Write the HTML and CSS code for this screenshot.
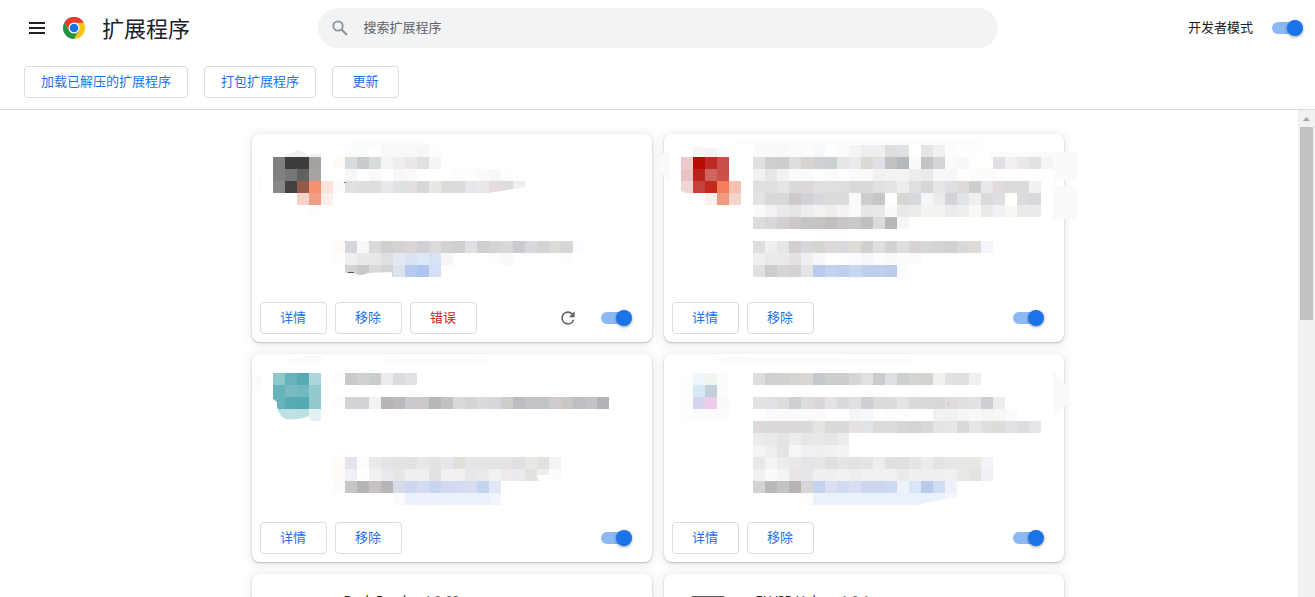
FILE: index.html
```html
<!DOCTYPE html>
<html lang="zh-CN">

<head>
  <meta charset="UTF-8">
  <meta name="viewport" content="width=device-width, initial-scale=1.0">
  <title>扩展程序</title>
  <link rel="stylesheet" href="styles.css">
</head>

<body>
  <header class="header">
    <div class="toolbar">
      <div class="toolbar-left">
        <button class="icon-button" type="button" aria-label="主菜单">
          <svg width="16" height="12" viewBox="0 0 16 12">
            <path d="M0 0h16v2H0zM0 5h16v2H0zM0 10h16v2H0z" fill="#202124" />
          </svg>
        </button>
        <svg class="logo" width="22" height="22" viewBox="0 0 48 48" aria-hidden="true">
          <path d="M24 24 3.2 12A24 24 0 0 1 44.8 12Z" fill="#e33b2e" />
          <path d="M24 12H44.8A24 24 0 0 1 24 48L34.4 30Z" fill="#fcc31e" />
          <path d="M13.6 30 3.2 12A24 24 0 0 0 24 48L34.4 30Z" fill="#229342" />
          <path d="M3.2 12 13.6 30 24 12H44.8A24 24 0 0 0 3.2 12Z" fill="#e33b2e" />
          <circle cx="24" cy="24" r="12" fill="#fff" />
          <circle cx="24" cy="24" r="9.5" fill="#1a73e8" />
        </svg>
        <h1 class="title">扩展程序</h1>
      </div>
      <div class="search">
        <svg width="16" height="16" viewBox="0 0 16 16" aria-hidden="true">
          <circle cx="6" cy="6" r="4.7" fill="none" stroke="#8f9296" stroke-width="1.8" />
          <path d="M9.5 9.5 15 15" stroke="#8f9296" stroke-width="2" />
        </svg>
        <input class="search-input" type="text" placeholder="搜索扩展程序" aria-label="搜索扩展程序">
      </div>
      <div class="toolbar-right">
        <label for="dev-mode">开发者模式</label>
        <input class="toggle" type="checkbox" id="dev-mode" checked>
      </div>
    </div>
    <div class="dev-buttons">
      <button class="btn" type="button">加载已解压的扩展程序</button>
      <button class="btn" type="button">打包扩展程序</button>
      <button class="btn" type="button">更新</button>
    </div>
  </header>

  <div class="content">
    <main class="cards">
      <article class="card">
        <svg class="mosaic" data-mosaic="first" aria-hidden="true"></svg>
        <div class="card-actions">
          <button class="btn" type="button">详情</button>
          <button class="btn" type="button">移除</button>
          <button class="btn btn-error" type="button">错误</button>
          <span class="spacer"></span>
          <button class="icon-button reload" type="button" aria-label="重新加载">
            <svg width="20" height="20" viewBox="0 0 24 24">
              <path d="M17.65 6.35A7.96 7.96 0 0 0 12 4a8 8 0 1 0 7.73 10h-2.08A6 6 0 1 1 12 6c1.66 0 3.14.69 4.22 1.78L13 11h7V4z" fill="#5f6368" />
            </svg>
          </button>
          <input class="toggle" type="checkbox" aria-label="启用" checked>
        </div>
      </article>

      <article class="card">
        <svg class="mosaic" data-mosaic="second" aria-hidden="true"></svg>
        <div class="card-actions">
          <button class="btn" type="button">详情</button>
          <button class="btn" type="button">移除</button>
          <span class="spacer"></span>
          <input class="toggle" type="checkbox" aria-label="启用" checked>
        </div>
      </article>

      <article class="card">
        <svg class="mosaic" data-mosaic="third" aria-hidden="true"></svg>
        <div class="card-actions">
          <button class="btn" type="button">详情</button>
          <button class="btn" type="button">移除</button>
          <span class="spacer"></span>
          <input class="toggle" type="checkbox" aria-label="启用" checked>
        </div>
      </article>

      <article class="card">
        <svg class="mosaic" data-mosaic="fourth" aria-hidden="true"></svg>
        <div class="card-actions">
          <button class="btn" type="button">详情</button>
          <button class="btn" type="button">移除</button>
          <span class="spacer"></span>
          <input class="toggle" type="checkbox" aria-label="启用" checked>
        </div>
      </article>

      <article class="card card-text">
        <div class="card-icon"></div>
        <div class="card-name">Dark Reader <span class="version">4.9.62</span></div>
      </article>

      <article class="card card-text">
        <div class="card-icon">
          <svg width="48" height="48" viewBox="0 0 48 48" aria-hidden="true">
            <rect x="7" y="2" width="34" height="40" rx="2" fill="#5f6065" />
          </svg>
        </div>
        <div class="card-name">ELVSP Helper <span class="version">1.0.1</span></div>
      </article>
    </main>

    <div class="scrollbar" aria-hidden="true">
      <svg width="17" height="17" viewBox="0 0 17 17">
        <path d="M5 11h7L8.5 7z" fill="#a3a3a3" />
      </svg>
      <div class="scrollbar-thumb"></div>
    </div>
  </div>

  <script src="mosaic.js"></script>
</body>

</html>
```

FILE: styles.css
```css
* {
  box-sizing: border-box;
}

body {
  margin: 0;
  height: 100vh;
  display: flex;
  flex-direction: column;
  overflow: hidden;
  background: #fff;
  color: #202124;
  font-family: "Open Sans", "Noto Sans CJK SC", sans-serif;
  font-size: 13px;
  line-height: 20px;
}

button,
input {
  font: inherit;
}

/* Header */
.header {
  border-bottom: 1px solid #dadce0;
  font-family: "Noto Sans CJK SC", sans-serif;
}

.toolbar {
  height: 56px;
  display: grid;
  grid-template-columns: 1fr minmax(0, 680px) 1fr;
  align-items: center;
}

.toolbar-left,
.toolbar-right {
  display: flex;
  align-items: center;
}

.toolbar-left {
  padding-left: 29px;
}

.toolbar-right {
  justify-content: flex-end;
  gap: 19px;
  padding-right: 15px;
}

.toolbar-right label {
  padding-bottom: 2px;
}

.icon-button {
  display: flex;
  padding: 0;
  border: none;
  background: none;
  cursor: pointer;
}

.logo {
  margin-left: 18px;
}

.title {
  margin: 0 0 0 17px;
  padding-bottom: 2px;
  font-size: 22px;
  font-weight: 400;
  line-height: 32px;
}

.search {
  height: 40px;
  display: flex;
  align-items: center;
  gap: 16px;
  padding: 0 14px;
  border-radius: 20px;
  background: #f1f3f4;
}

.search-input {
  flex: 1;
  padding: 0 0 2px;
  border: none;
  outline: none;
  background: none;
}

.search-input::placeholder {
  color: #5f6368;
}

.dev-buttons {
  display: flex;
  gap: 16px;
  padding: 10px 24px 11px;
}

.btn {
  min-width: 67px;
  height: 32px;
  padding: 0 16px 3px;
  border: 1px solid #dadce0;
  border-radius: 4px;
  background: #fff;
  color: #1a73e8;
  font-family: "Noto Sans CJK SC", sans-serif;
  cursor: pointer;
}

.btn-error {
  color: #c5221f;
}

/* Toggle */
.toggle {
  appearance: none;
  position: relative;
  width: 28px;
  height: 12px;
  margin: 0;
  border-radius: 6px;
  background: #8cb8f4;
  cursor: pointer;
}

.toggle::after {
  content: '';
  position: absolute;
  top: -2px;
  right: -3px;
  width: 16px;
  height: 16px;
  border-radius: 50%;
  background: #1a73e8;
  box-shadow: 0 1px 3px rgba(0, 0, 0, 0.4);
}

/* Cards */
.content {
  flex: 1;
  min-height: 0;
  position: relative;
  overflow: hidden;
}

.cards {
  display: grid;
  grid-template-columns: repeat(auto-fit, 400px);
  justify-content: center;
  gap: 12px;
  max-width: 1235px;
  margin: 0 auto;
  padding: 24px 60px;
}

.card {
  min-height: 208px;
  display: flex;
  flex-direction: column;
  border-radius: 8px;
  background: #fff;
  box-shadow: 0 1px 2px rgba(60, 64, 67, 0.3), 0 1px 8px 2px rgba(60, 64, 67, 0.1);
}

.mosaic {
  flex: 1;
  width: 100%;
  overflow: visible;
}

.card-actions {
  display: flex;
  align-items: center;
  gap: 8px;
  padding: 8px;
}

.card-actions .toggle {
  margin-right: 15px;
}

.spacer {
  flex: 1;
}

.reload {
  margin-right: 15px;
}

.card-text {
  flex-direction: row;
  gap: 24px;
  padding: 16px 20px;
}

.card-icon {
  width: 48px;
  padding-top: 4px;
}

.version {
  margin-left: 1px;
  color: #5f6368;
}

/* Scrollbar */
.scrollbar {
  position: absolute;
  top: 0;
  right: 0;
  bottom: 0;
  width: 17px;
  background: #f1f1f1;
}

.scrollbar svg {
  display: block;
}

.scrollbar-thumb {
  height: 193px;
  margin: 0 2px;
  background: #c1c1c1;
}
```

FILE: mosaic.js
```javascript
// Pixelated previews, 12px cells. Each row: [x, y, colours], "-" leaves a cell empty.
const CELL = 12;
const SVG_NS = 'http://www.w3.org/2000/svg';

const mosaics = {
  first: {
    under: [
      ['#f0f0f0', 'M33 23C34 18 39 20 43 17Q49 15 55 21L69 19V23Z'],
      ['#fbfbfb', 'M8 66V36Q4 52 8 66Z'],
      ['#fcfcfc', 'M93 12Q96 6 106 6H166Q177 6 177 12Z']
    ],
    rows: [
      [93, 11, 'fafcfd fafcfd - f8f8f8 f8f8f8 f8f8f8 f7f7f7 fdfdfd'],
      [21, 23, '808080 3d3d3d 3d3d3d a3a3a3'],
      [81, 23, 'fffaf6 d7dbdd c9cacb d8dcdc f3f5f4 eeeeee ece8e8 e0e0e2 f5f5f5'],
      [21, 35, '808080 777777 606060 a8a2a0'],
      [93, 35, 'f8f7f7 - f9f9f9 - f7f7f7 fafafa - - - fdfdfd fdfdfd fafafa f7f7f7 fdfefe'],
      [21, 47, '888888 424242 945a4a f59070 fde3dd fdfbfa e0e0e3 dedede dfdcdd e8e8e8 e0e1e4 e3dfde d7d7d9 e7e7e4 dcdadb dcdadb e7e6ea e8e9e9 e3dbdd dbdcde efeff2'],
      [45, 59, 'f6d2c8 ef9d85 fbeeeb'],
      [57, 71, 'fefdfd'],
      [81, 107, 'fffaf6 d6d7dd f8f8f8 dcd9da d0cfd1 d4d2d3 dbd4d4 d1d0d5 d9dadc d3d2d0 d0cfcf e0e0e4 d0ced1 d6d3d5 d9d8d6 cccad0 d8d8dc d4d2d3 dbdad7 d7d5d6 fafcff'],
      [81, 119, 'fdfdfd efefef e9e9e9 e8e6e6 dee0e2 e4e8f2 dbe2f0 dae8f7 d7e3f4 f6f6f6 - - - fcfcfc f9f9f9 - - - - fcfcfc'],
      [81, 131, '- d4d4d4 c8c8ca dbd8d8 d4d4d4 dbe3f1 b4cbed aec5ee d3e0f5']
    ],
    over: [
      ['#fff', 'M237 60V59L273 53V60Z'],
      ['#fff', 'M93 144V139H102Q108 143 116 139L140 138V144Z'],
      ['#555', 'M96 138h6v1h-6z'],
      ['#6b7fa5', 'M92 48h2v1h-2z']
    ]
  },
  second: {
    under: [
      ['#fafafa', 'M5 15V47L-4 38V22Z'],
      ['#fafafa', 'M326 18L389 18H413V46H394L389 52H413V85H389V23H326Z'],
      ['#fcfcfc', 'M65 11Q80 5 100 6H310Q319 6 319 18H300V11Z']
    ],
    rows: [
      [29, 11, 'f9f3f3 f8f3f3 fbf9f9'],
      [89, 11, 'fafafa f9f9fa f9f9fa fcfbf9 fcfcff f9f7f9 fdfffe fafafa f5f5f5 eeeeee efefef dddddb dfe1e5 fffffd e5e5e5 eff1f1 fcfcfd fefefe fefefe'],
      [17, 23, 'efcaca b50c04 bd2b24 c9504a'],
      [89, 23, 'e1e0de cfcfcf cbcdcf dddede d8d3cf cfcfd4 cad0cf e5e4e7 ebebeb dcd8d4 dfe0e5 c0c1c1 b5b9bc fafafa c3c3c3 d2d4d7 f9fbfa f8f8f8 ffffff fffffb e2e0e4 f3eff1 e9e9e9 e3e0e2 f5f5f7'],
      [17, 35, 'ebc2c2 b8241b cd6660 cb5048'],
      [89, 35, 'f2f2f2 e6e6e6 f3f3f3 f9fafa fafafa fefefe fbfbfb fefefe fafafa fafafa f1f1f1 f3f3f3 f3f3f3 ededed eaeaea f6f9f8 f5f8f7 ffffff fcfcfc fbfbfb fcfcfc'],
      [17, 47, 'f1d4d4 c3423b c12a1a f47e59 f9bfaf'],
      [89, 47, 'dfdfe0 dfdfe0 e5e5e5 dadadb dbd8d7 dfdfe2 e0dede dedee0 dbd8d9 dadadd e2dfe2 e3e3e3 ededed dfdfe0 d6d6d6 e8e5e8 dedfe2 dfd9d8 cecece e6e8eb e3dbdb dbdbdb dbdbdb eff1f3'],
      [41, 59, 'fbf1ef f09a7f f6d4ca'],
      [89, 59, 'e3e3e1 d9d9d9 d8d8d8 cfcaca d0d2d5 d7d9dc dedcda dadcde f9f9f9 cdcdcd c7c7c9 fefefe d7d6d2 d9d9dd f4f7fa edebe9 d4d4d8 e1e4e7 f1eef0 dadada dfdfe2 fffffb dbdade d9d7da'],
      [89, 71, 'fafafa f2f2f2 eaeaea e6e6e6 eeeeee f2f2f2 eeeeee f3f3f3 f9f9f9 e6e6e6 e7e9e8 fafafa e9e9e9 ececec f4f4f1 f5f3f2 ebebee eeeeee f8f8f5 ebe9e9 eff1f5 f8f8f5 eaeaea eaeaea'],
      [89, 83, 'dddcda d7d6da d4cfd1 cdc8ca c5c3c5 c5c3c5 c3bdbb c7c5c8 c9c9cb bfc0c2 dadcdb b7b9b8 f5f6f8'],
      [89, 107, 'dfdddf efeff1 e5e5e3 d3cecf d6d7da d6d5d1 dcd8da d8d9de dfdcd8 d0cfd2 dfdee1 d3d1d3 dedee1 d7d3d4 d8d5d7 d6d3d6 d0cfd2 dad7d7 dfdbd9 f3f5fa'],
      [89, 119, 'efefef eaeaea eaeaea e3e1e3 efefef f6f8fd - fefefe fafbff f5f7fb fafcfe fafafa fbfcfb fafcfc'],
      [89, 131, 'e0dfe1 cccccc d5d5d5 d5d1d1 e3e4e8 b9caec c4d2ef c0cfec c8d6f1 c1cfec c1cfec bccbea fcfdff']
    ],
    over: [
      ['#fff', 'M29 10H65V12Q60 17 50 14L38 13Q32 15 29 10Z'],
      ['#fff', 'M17 60V57Q20 57 22 60Z']
    ]
  },
  third: {
    under: [
      ['#fafafa', 'M9 19Q-3 28 9 40Z'],
      ['#fafafa', 'M30 7L54 2Q70 -1 72 7Z'],
      ['#fafafa', 'M110 7Q185 3 259 7Z']
    ],
    rows: [
      [21, 19, '8ec8cf 67b3bb 55aab3 acd7dc - fefdfb c9c9c9 cfd1d0 c9cdce eeeceb dddbdf e1e1e1'],
      [21, 31, '67b3bb 79bbc2 71b8bf 92cad0'],
      [21, 43, '67b3bb 59acb5 54aab3 92cad0 - fefdfb d4d2d6 d3d2d4 f1f3f2 b9b4b6 bab9bc cbc9ce cdc8c9 b6b7b9 c1c2c4 d9d9dc d7d4d5 dadadc d7d6da cdccc9 bebcc0 c5c2c4 c2c2c9 d1cbcf cbc7c4 bebfc2 c4c2c6 b2b4b8'],
      [21, 55, 'bfe0e3 bfe0e3 bfe0e3 e2f1f2'],
      [81, 103, 'fffcf8 e3e5ea fcfcfb ebeae8 e4e5e8 e3e3e3 e2e2e2 e7e7e7 e4e2e3 e6e7ea e1dedc e3e5e9 e5e5e3 e3e4e4 e5e4e2 dfe0e3 e8e8e5 e3e1e4 f1f3f5'],
      [81, 115, 'fffcf8 eff1f4 fdfefe f2eff1 e9eaed e6e6e6 efefef efefef e2e2e2 f1f1f1 f1f0ee e8e8eb eaeaea f1f1f1 efebeb e9ebed e2e2e2 efedef fafcfb'],
      [81, 127, 'fbfbfb c5c5c7 b4b4b7 c8c0c2 b6b6b9 d5dce7 ccd6f1 d3dbf0 c9d5f0 d2daf0 d4daf0 d7dcf1 c4d5ef e2e6f6'],
      [141, 139, 'f8faff e9f1fd ecf1fb ecf1fb e9f1fc e9f1fc e9f1fc e9f1fc f2f4fd']
    ],
    over: [
      ['#fff', 'M20 44L25 48Q24 59 33 65Q43 67 57 62L60 68H20Z'],
      ['#fff', 'M284 121H301V128H289Z'],
      ['#fff', 'M355 56l3-2v2z']
    ]
  },
  fourth: {
    under: [
      ['#fafafa', 'M389 16L403 33Q407 42 403 50L389 64Z'],
      ['#fafafa', 'M52 7Q55 3 65 3L230 5L260 7Z'],
      ['#fdfdfd', 'M17 26L29 19V67H17Z']
    ],
    rows: [
      [29, 19, 'edf7fb f0f5f0 fcfcfc'],
      [89, 19, 'dddddd cfd0d2 d0d2d1 d5d5d1 dbd5d6 c3c9cd cbcdcb cdcdcb d4d7d6 e3e1df cbcacd dde1e5 cccfcd d4d4d4 d3d3cf eff1f0 e1e0e2 e1e0e0 f0f0f0'],
      [29, 31, 'd8e9f6 c3d0dc fcfcfc'],
      [29, 43, 'd4d4f1 efcce9 fafafa'],
      [89, 43, 'e3e2e0 e2e0e4 dcdcdd d0ced2 dcdcdd ddd6d7 e1e3e6 dad8d9 e0dfe2 d0ced3 dddbd9 dddbdc e5e3e5 dbd9d9 dad8d9 d9d7da e1dadb e0e0e3 e2e1e4 cfcdd2 ededed'],
      [29, 55, 'fbfbfb fbfbfb fbfbfb'],
      [101, 55, 'fafafc fafafa fafafa fafafa fafafa - - f4f4f4 f5f7fa - fdfdfd fdfdfd - - f1f1f1 f1f1f1 f5f5f5 faf8f6 f5f5f5 f7f7f7 fafafa'],
      [89, 67, 'ddd9db d9dadb dcd8d7 dadadc dadadc e4e4e1 d9dadb dbd9da e6e0e1 e0e3e8 dbdbdb dbdbdb d7d5d6 d5d4d4 d7d8d9 e4e4e4 e7e7e7 dad9da e6e6e4 dddedd dcdcd9 e1e1e4 dbdcdf e6e6e6'],
      [89, 79, 'ebebec e9e9e9 e4e4e7 eeecea e6e6e9 e8e8e8 e8e5e8 ebeced'],
      [89, 91, 'f4f4f4 eeeeee e4e4e7 f7f7f7 f0f0f0 efefed f2f0f1 f1f3f5'],
      [89, 103, 'e8e8e8 f4f4f4 eeebec ebe8e9 e4e5e8 e6e6e6 e1dedf e3e6e4 e2e2e2 e2e4e5 ededed e0e0e1 e1dedf e5e5e5 efebec e4e2e3 e7e7e7 e7e7e7 e8e8e4 f1f3f6'],
      [89, 115, 'f1f1f1 fafafa f3f3f3 ebe6e5 e6e6e9 efefef efefef eff2f0 ededed f1f1f1 f1f1f1 f1f1f1 ece9eb efefef efefef efefef f0f0f0 e8e8e9 e4e4e2 eff1f6'],
      [89, 127, 'd3d3d1 b9b9ba c3c3c6 b8b3b5 d5d6d8 c4d1ef d9e0f4 d2daef d9dff2 cdd5ef cdd5ef cdd9f2 eef2fb dae5f5 b9cbed cfdcf2 ecf1fb'],
      [137, 139, 'fcfcfc e9f1fc e9f1fc e9f1fc e9f1fc e9f1fc e9f1fc e9f1fc e9f1fc e9f1fc e9f1fc e9f1fc f3f6fd']
    ],
    over: [
      ['#fff', 'M248 152L281 145L294 143V152Z'],
      ['#fff', 'M248 106Q257 103 268 106Q257 104 248 106Z'],
      ['#b48a8a', 'M284 50h1v1h-1z']
    ]
  }
};

function addPath(svg, fill, d) {
  const path = document.createElementNS(SVG_NS, 'path');
  path.setAttribute('fill', fill);
  path.setAttribute('d', d);
  svg.appendChild(path);
}

document.querySelectorAll('.mosaic').forEach(function (svg) {
  const mosaic = mosaics[svg.dataset.mosaic];

  mosaic.under.forEach(([fill, d]) => addPath(svg, fill, d));

  mosaic.rows.forEach(([x, y, colours]) => {
    colours.split(' ').forEach((colour, i) => {
      if (colour !== '-') {
        addPath(svg, '#' + colour, `M${x + i * CELL} ${y}h${CELL}v${CELL}h-${CELL}z`);
      }
    });
  });

  mosaic.over.forEach(([fill, d]) => addPath(svg, fill, d));
});
```
